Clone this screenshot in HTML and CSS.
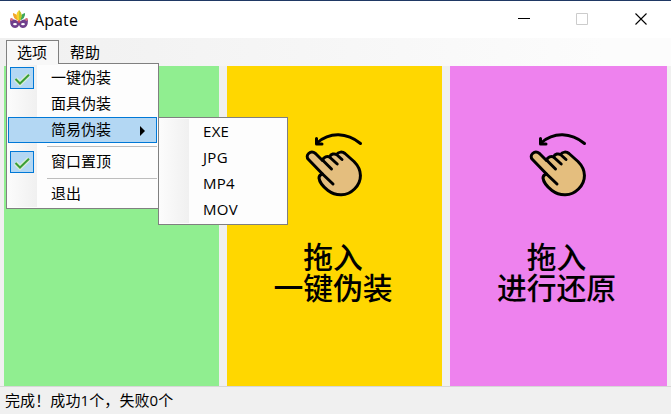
FILE: index.html
```html
<!DOCTYPE html>
<html lang="zh-CN">
<head>
<meta charset="utf-8">
<title>Apate</title>
<link rel="stylesheet" href="styles.css">
</head>
<body>
<svg class="defs" aria-hidden="true">
  <symbol id="check" viewBox="0 0 22 20">
    <path d="M4.500 11l4.500 4.500 9-8.700" fill="none" stroke="#d9ecd9" stroke-width="4.600"/>
    <path d="M4.500 11l4.500 4.500 9-8.700" fill="none" stroke="#3a9f35" stroke-width="2"/>
  </symbol>
  <symbol id="swipe" viewBox="0 0 64 72">
    <g stroke="#000" stroke-width="3" stroke-linecap="round" stroke-linejoin="round">
      <path d="M58.500 15.500C45 4.500 28 3.500 15 15" fill="none"/>
      <path d="M14.500 10.500v5.500h5.500" fill="none"/>
      <path d="M20.500 46L6.500 31.500C2.500 27.500 8.500 21.500 13.500 25.500L20.500 32.500C21.500 28.500 25.500 28 27.500 29C29 25.500 32.500 25.500 34.500 26.500C36.500 23.500 40.500 23.500 43 25.500L52 33.500C60.500 42 60.500 53 52.500 61C45 68.500 34 68.500 26 62.500C21.500 59 17.500 54.500 17 50C17 48 18.500 46.500 20.500 46Z" fill="#e4be7e"/>
      <path d="M20.500 46l10.500 10M20.500 32l9 9M27.500 29l7.700 7M34.500 26.500l5.500 5" fill="none"/>
    </g>
  </symbol>
</svg>
<div class="window">
  <header class="titlebar">
    <svg class="logo" width="20" height="20" viewBox="0 0 20 20">
      <path d="M10 11Q3 8 4 3Q8 4 10 8Z" fill="#f2a62c"/>
      <path d="M10 11Q17 8 16 3Q12 4 10 8Z" fill="#3fa65c"/>
      <path d="M10 12Q5 5 10 0Q15 5 10 12Z" fill="#f8d22c"/>
      <path d="M10 0Q15 5 10 12Z" fill="#b9c62d"/>
      <path d="M1 10Q5 8 10 12Q15 8 19 10Q19 18 14 18Q11 18 10 15Q9 18 6 18Q1 18 1 10Z" fill="#6f3f8c"/>
      <ellipse cx="6" cy="14.200" rx="1.900" ry="1.100" fill="#fff"/>
      <ellipse cx="14" cy="14.200" rx="1.900" ry="1.100" fill="#fff"/>
      <circle cx="2.500" cy="9.500" r="1.400" fill="#d9707a"/>
      <circle cx="17.500" cy="9.500" r="1.400" fill="#d9707a"/>
      <circle cx="10" cy="11.500" r="1.300" fill="#d94f58"/>
    </svg>
    <span class="title">Apate</span>
    <svg class="controls" width="132" height="14" viewBox="0 0 132 14">
      <path d="M0 5.500h12" stroke="#000"/>
      <path d="M58.500 .5h11v11h-11z" stroke="#ccc" fill="none"/>
      <path d="M117.500 .5l11 11M128.500 .5l-11 11" stroke="#000" stroke-width="1.100"/>
    </svg>
  </header>
  <nav class="menubar">
    <div class="menu open"><span>选项</span>
      <div class="dropdown main">
        <div class="item checked"><svg class="box"><use href="#check"/></svg><span>一键伪装</span></div>
        <div class="item"><span>面具伪装</span></div>
        <div class="item active"><span>简易伪装</span><svg class="arrow" width="5" height="10"><path d="M0 0l5 5-5 5z"/></svg>
          <div class="dropdown sub">
            <div class="item"><span>EXE</span></div>
            <div class="item"><span>JPG</span></div>
            <div class="item"><span>MP4</span></div>
            <div class="item"><span>MOV</span></div>
          </div>
        </div>
        <div class="separator"></div>
        <div class="item checked"><svg class="box"><use href="#check"/></svg><span>窗口置顶</span></div>
        <div class="separator"></div>
        <div class="item"><span>退出</span></div>
      </div>
    </div>
    <div class="menu"><span>帮助</span></div>
  </nav>
  <main class="panels">
    <section class="panel green"></section>
    <section class="panel gold"><svg class="hand"><use href="#swipe"/></svg><p>拖入<br>一键伪装</p></section>
    <section class="panel violet"><svg class="hand"><use href="#swipe"/></svg><p>拖入<br>进行还原</p></section>
  </main>
  <footer class="status">完成！成功1个，失败0个</footer>
</div>
</body>
</html>
```
FILE: styles.css
```css
* { box-sizing: border-box; }
body {
  margin: 0;
  overflow: hidden;
  background: #f0f0f0;
  color: #000;
  font: 15px/26px "Open Sans", "Noto Sans CJK SC", sans-serif;
}
.defs { position: absolute; width: 0; height: 0; }
.window { height: 414px; display: flex; flex-direction: column; }
.titlebar {
  height: 38px;
  flex: none;
  display: flex;
  align-items: center;
  padding: 0 21px 0 9px;
  background: #fff;
  border-top: 1px solid #1f3864;
}
.title { margin-left: 5px; font-size: 16px; letter-spacing: .1px; }
.controls { margin-left: auto; }
.menubar {
  height: 28px;
  flex: none;
  display: flex;
  padding: 2px 0 2px 6px;
  background: linear-gradient(90deg, #f0f0f0, #fcfcfc 90%);
}
.menu { position: relative; width: 53px; padding-left: 11px; line-height: 24px; }
.menu.open {
  height: 24px;
  padding-left: 10px;
  background: #f8f8f8;
  border: 1px solid #808080;
  border-bottom: 0;
}
.menu.open > span { position: relative; z-index: 3; top: -1px; }
.menu.open::after {
  content: "";
  position: absolute;
  z-index: 3;
  left: 0;
  right: 0;
  bottom: -1px;
  height: 2px;
  background: #f8f8f8;
}
.dropdown {
  position: absolute;
  z-index: 2;
  border: 1px solid #808080;
  padding: 1px;
  background: linear-gradient(90deg, #fcfcfc, #f0f0f0) 0 1px / 30px calc(100% - 2px) no-repeat #fdfdfd;
}
.main { left: -1px; top: 22px; width: 153px; }
.sub { left: 149px; top: -1px; width: 130px; letter-spacing: .3px; }
.item { position: relative; height: 26px; padding-left: 43px; white-space: nowrap; line-height: 24px; }
.active {
  padding-left: 42px;
  line-height: 22px;
  background: #b3d7f3;
  border: 1px solid #0078d7;
}
.box {
  position: absolute;
  left: 2px;
  top: 2px;
  width: 24px;
  height: 22px;
  background: #b3d7f3;
  border: 1px solid #0078d7;
}
.arrow { position: absolute; left: 131px; top: 8px; }
.separator { height: 6px; margin-left: 39px; padding-top: 3px; }
.separator::before { content: ""; display: block; height: 1px; background: #bdbdbd; }
.panels {
  height: 320px;
  flex: none;
  display: grid;
  grid-template-columns: 215px 215px 217px;
  gap: 8px;
  padding: 0 4px;
}
.panel { display: flex; flex-direction: column; align-items: center; padding-top: 62px; }
.green { background: #90ee90; }
.gold { background: gold; }
.violet { background: violet; }
.hand { width: 64px; height: 72px; flex: none; margin-right: 1px; }
.panel p {
  margin: 40px 3px 0 0;
  font: 500 29.800px/31px "Noto Sans CJK SC", sans-serif;
  text-align: center;
}
.violet p { margin-right: 4px; }
.status { flex: 1; border-top: 1px solid #d7d7d7; padding: 0 0 0 5px; letter-spacing: .1px; }
```
